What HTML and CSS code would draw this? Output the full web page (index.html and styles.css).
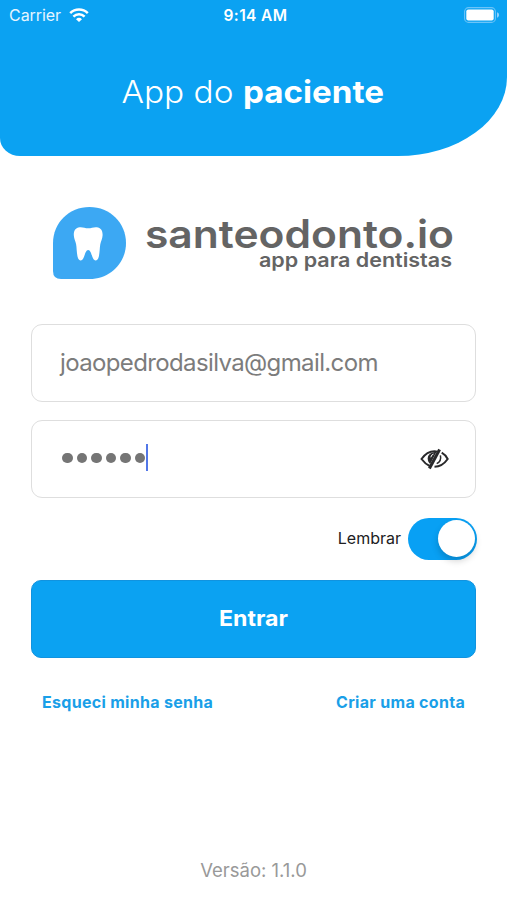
FILE: index.html
```html
<!DOCTYPE html>
<html lang="pt-BR">
<head>
<meta charset="utf-8">
<meta name="viewport" content="width=device-width">
<title>App do paciente</title>
<link rel="stylesheet" href="styles.css">
</head>
<body>
<div class="screen">
  <header class="header">
    <div class="status">
      <div class="carrier"><span>Carrier</span>
        <svg class="wifi" width="20" height="14" viewBox="0 0 20 14" fill="none" stroke="#fff" stroke-width="2.5">
          <path d="M1.2 5.1a12.6 12.6 0 0 1 17.6 0"/>
          <path d="M4.4 8.6a8 8 0 0 1 11.2 0"/>
          <path d="M7 11.2a4.4 4.4 0 0 1 6 0L10 14z" fill="#fff" stroke="none"/>
        </svg>
      </div>
      <span class="clock">9:14 AM</span>
      <svg class="battery" width="36" height="16" viewBox="0 0 36 16">
        <rect x=".6" y=".6" width="30.8" height="14.8" rx="4" fill="none" stroke="#6cc4f8" stroke-width="1.1"/>
        <rect x="2.3" y="2.6" width="27.4" height="10.8" rx="2" fill="#fff"/>
        <path d="M33 5.3c2.800.8 2.800 4.600 0 5.400z" fill="#8fd0fb"/>
      </svg>
    </div>
    <svg class="title" width="507" height="50" viewBox="0 0 507 50" role="heading">
      <text class="title-light" x="121.5" y="36" textLength="112" lengthAdjust="spacingAndGlyphs">App do</text>
      <text class="title-bold" x="243" y="36" textLength="141" lengthAdjust="spacingAndGlyphs">paciente</text>
    </svg>
  </header>
  <main class="content">
    <div class="brand">
      <svg class="bubble" width="73" height="72" viewBox="0 0 73 72">
        <path d="M36.5 0C57 0 73 16 73 36S57 72 36.500 72H8q-8 0-8-8V36C0 16 16 0 36.500 0z" fill="#3ca8f3"/>
        <path d="M35.200 21.300c3 0 5.500-1.300 8.500-1 4.200.4 6.100 3.600 5.900 8-.2 3.700-1.700 6-2.300 8.900-1 5-.2 16-4.500 16.200-4.200.2-3.900-10.400-7.600-10.400s-3.400 10.600-7.600 10.400c-4.300-.2-3.500-11.200-4.500-16.200-.6-2.900-2.100-5.200-2.300-8.900-.2-4.400 1.700-7.600 5.900-8 3-.3 5.500 1 8.500 1z" fill="#fff"/>
      </svg>
      <svg class="wordmark" width="311" height="76" viewBox="0 0 311 76">
        <text class="name" x="-1" y="40.500" textLength="309" lengthAdjust="spacingAndGlyphs">santeodonto.io</text>
        <text class="tagline" x="113" y="60" textLength="193" lengthAdjust="spacingAndGlyphs">app para dentistas</text>
      </svg>
    </div>
    <div class="field"><span class="email">joaopedrodasilva@gmail.com</span></div>
    <div class="field">
      <div class="password"><i></i><i></i><i></i><i></i><i></i><i></i><b class="caret"></b></div>
      <svg class="eye" width="29" height="22" viewBox="0 0 29 22" fill="none" stroke="#29292b" stroke-width="2">
        <path d="M9.700 18C6 16.300 3.300 13.400 1.500 11 5 6 9.500 3.200 14.500 3.200q1.500 0 3 .4"/>
        <path d="M16.500 3.700C11 4 7.700 6.500 7.700 10.500c0 2.400 1 4.300 2.500 5.500z" fill="#29292b" stroke="none"/>
        <path d="M10.800 9.300q.4-2.600 2.700-3.200" stroke="#fff" stroke-width="1"/>
        <path d="M19.600 1.500 9.400 20.500" stroke-width="3"/>
        <path d="M21.700 4.700c2.500 1.400 4.500 3.500 6 6.300-3.500 5-7.700 7.700-13.200 7.800"/>
        <path d="M20.400 7.300c.9 4-.6 6.800-3.700 8.300" stroke-width="1.500"/>
      </svg>
    </div>
    <div class="remember"><span>Lembrar</span><div class="switch"><div class="knob"></div></div></div>
    <div class="button">
      <svg width="72" height="30" viewBox="0 0 72 30"><text class="enter" x="1" y="22" textLength="69" lengthAdjust="spacingAndGlyphs">Entrar</text></svg>
    </div>
    <div class="links"><a class="forgot">Esqueci minha senha</a><a class="create">Criar uma conta</a></div>
  </main>
  <footer class="version">Versão: 1.1.0</footer>
</div>
</body>
</html>
```

FILE: styles.css
```css
* { box-sizing: border-box; }
body { margin: 0; background: #fff; font-family: Inter, "Liberation Sans", sans-serif; }
.screen { width: 507px; height: 900px; display: flex; flex-direction: column; overflow: hidden; }
.header { height: 155.5px; background: #0ba2f2; border-radius: 0 0 109px 20px / 0 0 79px 18px; color: #fff; }
.status { height: 30px; display: grid; grid-template-columns: 1fr auto 1fr; align-items: center; padding: 0 7px 0 9px; }
.carrier { display: flex; align-items: center; gap: 8px; font-size: 16px; letter-spacing: -.05px; color: #e4f5ff; }
.wifi { margin-top: -1px; }
.clock { font-size: 15.5px; font-weight: 600; letter-spacing: .4px; margin-left: 2px; }
.battery { justify-self: end; }
.title { display: block; margin-top: 37px; }
.title-light { font-size: 31px; font-weight: 300; fill: #fff; }
.title-bold { font-size: 31px; font-weight: 700; fill: #fff; }
.content { padding: 51px 31px 0; display: flex; flex-direction: column; }
.brand { height: 72px; display: flex; padding-left: 22px; gap: 20px; margin-bottom: 45px; }
.bubble, .wordmark { flex: none; }
.name { font-size: 39px; font-weight: 600; fill: #646464; }
.tagline { font-size: 19.5px; font-weight: 600; fill: #646464; }
.field { height: 78.5px; border: 1.5px solid #dedede; border-radius: 11px; display: flex; align-items: center; justify-content: space-between; padding: 0 26px 0 28px; margin-bottom: 17.5px; }
.email { font-size: 24px; color: #7c7c7c; letter-spacing: -.63px; }
.password { display: flex; align-items: center; gap: 4px; padding-left: 2px; margin-top: -2px; }
.password i { width: 10.5px; height: 10.5px; border-radius: 50%; background: #757575; }
.caret { width: 2px; height: 27px; background: #5277e8; margin-left: -3px; }
.remember { height: 42px; margin-top: 2px; display: flex; justify-content: flex-end; align-items: center; gap: 7px; font-size: 16px; color: #202022; margin-right: -1px; }
.remember span { margin-top: -1px; }
.switch { width: 69px; height: 42px; border-radius: 21px; background: #08a0f4; padding: 2.500px; display: flex; justify-content: flex-end; }
.knob { width: 37px; height: 37px; border-radius: 50%; background: #fff; box-shadow: 0 4px 7px rgba(0,0,0,.18); }
.button { height: 78px; margin-top: 20px; border: 1.5px solid #1193df; border-radius: 10px; background: #0ba2f2; display: flex; align-items: center; justify-content: center; }
.enter { font-size: 22px; font-weight: 700; fill: #fff; }
.links { display: flex; justify-content: space-between; padding: 0 11px; margin-top: 34px; font-size: 16px; line-height: 20px; font-weight: 700; letter-spacing: .3px; color: #1a9fe8; }
.version { margin-top: auto; height: 40px; text-align: center; font-size: 18.500px; line-height: 20px; color: #999; }
```
